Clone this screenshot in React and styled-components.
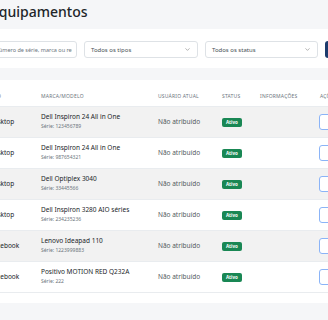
import React from "react";
import styled, { createGlobalStyle } from "styled-components";
import { ChevronDown, Pencil, Plus } from "lucide-react";

const GlobalStyle = createGlobalStyle`
	html, body {
		margin: 0;
		padding: 0;
		background: #f5f6f8;
		font-family: "Noto Sans", "Open Sans", sans-serif;
		color: #212529;
		overflow: hidden;
	}
`;

const Page = styled.div`
	margin-left: -80px;
	width: 520px;
`;
const Title = styled.h1`
	margin: 0;
	padding-left: 71px;
	font-size: 14px;
	line-height: 24px;
	font-weight: 500;
	color: #212529;
`;
const FilterPanel = styled.div`
	margin-top: 5px;
	background: #ffffff;
	padding: 12px 20px 10px 40px;
	display: grid;
	grid-template-columns: 117px 114px 113px 90px;
	gap: 7px;
`;
const Search = styled.input`
	box-sizing: border-box;
	height: 17px;
	border: 1px solid #dee2e6;
	border-radius: 3px;
	padding: 0 4px 0 5px;
	font-family: inherit;
	font-size: 5.5px;
	color: #495057;
	background: #fff;
	&::placeholder {
		color: #6c757d;
	}
`;
const Select = styled.div`
	box-sizing: border-box;
	height: 17px;
	border: 1px solid #dee2e6;
	border-radius: 3px;
	padding: 0 6px;
	display: flex;
	align-items: center;
	justify-content: space-between;
	font-size: 6px;
	color: #495057;
	background: #fff;
`;
const NewButton = styled.button`
	height: 17px;
	border: none;
	border-radius: 3px;
	background: #1c3b6c;
	color: #fff;
	font-family: inherit;
	font-size: 6px;
	display: flex;
	align-items: center;
	gap: 3px;
	padding: 0 8px;
`;
const Card = styled.div`
	margin-top: 12px;
	background: #ffffff;
	padding: 6px 0 10px 57px;
`;
const Table = styled.table`
	border-collapse: collapse;
	table-layout: fixed;
	width: 429px;
`;
const Th = styled.th`
	width: ${p => p.w}px;
	height: 20px;
	padding: 1px 0 0 12px;
	box-sizing: border-box;
	text-align: left;
	font-size: 5px;
	font-weight: 400;
	letter-spacing: 0.2px;
	color: #6c757d;
	text-transform: uppercase;
	border-bottom: 1px solid #e9ecef;
	white-space: nowrap;
`;
const Row = styled.tr`
	background: ${p => (p.striped ? "#f2f2f2" : "#ffffff")};
	border-bottom: 1px solid #e9ecef;
`;
const Td = styled.td`
	height: 30px;
	padding: 0 0 0 12px;
	vertical-align: middle;
	font-size: 6.5px;
	color: #212529;
	white-space: nowrap;
	overflow: hidden;
`;
const Type = styled.span`
	font-weight: 400;
	color: #212529;
`;
const Model = styled.div`
	font-size: 6.5px;
	font-weight: 400;
	color: #212529;
	line-height: 10px;
`;
const Serial = styled.div`
	font-size: 5px;
	color: #6c757d;
	line-height: 9px;
`;
const User = styled.span`
	color: #555b61;
`;
const Badge = styled.span`
	display: inline-block;
	background: #198754;
	color: #fff;
	font-size: 4.5px;
	font-weight: 700;
	border-radius: 2px;
	padding: 2px 4px;
	line-height: 5px;
`;
const ActionButton = styled.button`
	width: 24px;
	height: 16px;
	margin-left: -1px;
	border: 1px solid #8bb4f7;
	border-radius: 3px;
	background: #fff;
	color: #0d6efd;
	display: flex;
	align-items: center;
	justify-content: center;
	padding: 0;
`;

const rows = [
	{ type: "Desktop", model: "Dell Inspiron 24 All in One", serial: "123456789" },
	{ type: "Desktop", model: "Dell Inspiron 24 All in One", serial: "987654321" },
	{ type: "Desktop", model: "Dell Optiplex 3040", serial: "33445566" },
	{ type: "Desktop", model: "Dell Inspiron 3280 AIO séries", serial: "234235236" },
	{ type: "Notebook", model: "Lenovo Ideapad 110", serial: "1223999883" },
	{ type: "Notebook", model: "Positivo MOTION RED Q232A", serial: "222" },
];

export default function App() {
	return (
		<Page>
			<GlobalStyle />
			<Title>Equipamentos</Title>
			<FilterPanel>
				<Search placeholder="Buscar por número de série, marca ou responsável" />
				<Select>
					Todos os tipos
					<ChevronDown size={7} strokeWidth={1.5} color="#555" />
				</Select>
				<Select>
					Todos os status
					<ChevronDown size={7} strokeWidth={1.5} color="#555" />
				</Select>
				<NewButton>
					<Plus size={7} />
					Novo
				</NewButton>
			</FilterPanel>
			<Card>
				<Table>
					<thead>
						<tr>
							<Th w={52}>Tipo</Th>
							<Th w={117}>Marca/Modelo</Th>
							<Th w={64}>Usuário atual</Th>
							<Th w={38}>Status</Th>
							<Th w={60}>Informações</Th>
							<Th w={98}>Ações</Th>
						</tr>
					</thead>
					<tbody>
						{rows.map((r, i) => (
							<Row key={i} striped={i % 2 === 0}>
								<Td><Type>{r.type}</Type></Td>
								<Td>
									<Model>{r.model}</Model>
									<Serial>Série: {r.serial}</Serial>
								</Td>
								<Td><User>Não atribuído</User></Td>
								<Td><Badge>Ativo</Badge></Td>
								<Td />
								<Td>
									<ActionButton><Pencil size={7} /></ActionButton>
								</Td>
							</Row>
						))}
					</tbody>
				</Table>
			</Card>
		</Page>
	);
}
